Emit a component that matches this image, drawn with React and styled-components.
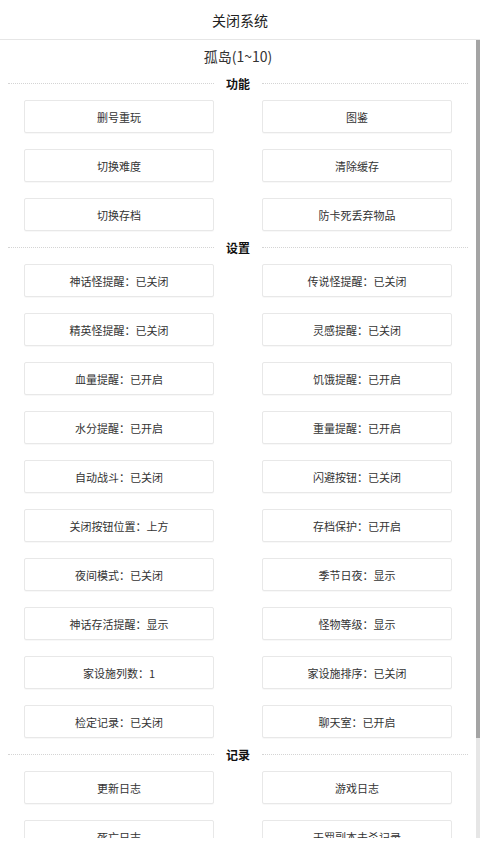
import React from 'react';
import styled, { createGlobalStyle } from 'styled-components';

const GlobalStyle = createGlobalStyle`
  html, body {
    margin: 0;
    padding: 0;
    height: 100%;
    overflow: hidden;
    background: #fff;
  }
  #root {
    height: 100%;
  }
  * {
    box-sizing: border-box;
  }
`;

const Page = styled.div`
  height: 100vh;
  display: flex;
  flex-direction: column;
  font-family: "Noto Sans CJK SC", "Noto Sans", sans-serif;
  color: #333;
`;

const Header = styled.div`
  height: 40px;
  flex-shrink: 0;
  display: flex;
  align-items: center;
  justify-content: center;
  border-bottom: 1px solid #e6e6e6;
  font-size: 14px;
  color: #222;
`;

const Body = styled.div`
  flex: 1;
  min-height: 0;
  display: flex;
`;

const Scroller = styled.div`
  flex: 1;
  overflow: hidden;
`;

// scroll rail drawn by hand, the headless browser hides native scrollbars
const Rail = styled.div`
  width: 4px;
  flex-shrink: 0;
  background: #e6e6e6;
`;

const Thumb = styled.div`
  height: ${(p) => p.$size}px;
  background: #a4a4a4;
`;

const BottomGap = styled.div`
  height: 15px;
  flex-shrink: 0;
  background: #fff;
`;

const Content = styled.div`
  padding: 5px 8px 94px;
`;

const Island = styled.div`
  text-align: center;
  font-size: 14px;
  line-height: 22px;
  color: #333;
`;

const SectionTitle = styled.div`
  height: 33px;
  display: flex;
  align-items: center;
  gap: 12px;
  font-size: 12px;
  font-weight: bold;
  color: #111;

  &::before,
  &::after {
    content: '';
    flex: 1;
    border-top: 1px dotted #d4d4d4;
  }
`;

const Grid = styled.div`
  display: grid;
  grid-template-columns: 190px 190px;
  column-gap: 48px;
  row-gap: 16px;
  padding: 0 16px;
`;

const Button = styled.div`
  height: 33px;
  display: flex;
  align-items: center;
  justify-content: center;
  background: #fff;
  border: 1px solid #e8e8e8;
  border-radius: 2px;
  box-shadow: 0 1px 1px rgba(0, 0, 0, 0.03);
  font-size: 11px;
  color: #333;
`;

const sections = [
  {
    title: '功能',
    items: ['删号重玩', '图鉴', '切换难度', '清除缓存', '切换存档', '防卡死丢弃物品'],
  },
  {
    title: '设置',
    items: [
      '神话怪提醒：已关闭',
      '传说怪提醒：已关闭',
      '精英怪提醒：已关闭',
      '灵感提醒：已关闭',
      '血量提醒：已开启',
      '饥饿提醒：已开启',
      '水分提醒：已开启',
      '重量提醒：已开启',
      '自动战斗：已关闭',
      '闪避按钮：已关闭',
      '关闭按钮位置：上方',
      '存档保护：已开启',
      '夜间模式：已关闭',
      '季节日夜：显示',
      '神话存活提醒：显示',
      '怪物等级：显示',
      '家设施列数：1',
      '家设施排序：已关闭',
      '检定记录：已关闭',
      '聊天室：已开启',
    ],
  },
  {
    title: '记录',
    items: ['更新日志', '游戏日志', '死亡日志', '天罚副本击杀记录'],
  },
];

const App = () => {
  return (
    <Page>
      <GlobalStyle />
      <Header>关闭系统</Header>
      <Body>
        <Scroller>
          <Content>
            <Island>孤岛(1~10)</Island>
            {sections.map((s) => (
              <React.Fragment key={s.title}>
                <SectionTitle>{s.title}</SectionTitle>
                <Grid>
                  {s.items.map((item) => (
                    <Button key={item}>{item}</Button>
                  ))}
                </Grid>
              </React.Fragment>
            ))}
          </Content>
        </Scroller>
        <Rail>
          <Thumb $size={698} />
        </Rail>
      </Body>
      <BottomGap />
    </Page>
  );
};

export default App;
